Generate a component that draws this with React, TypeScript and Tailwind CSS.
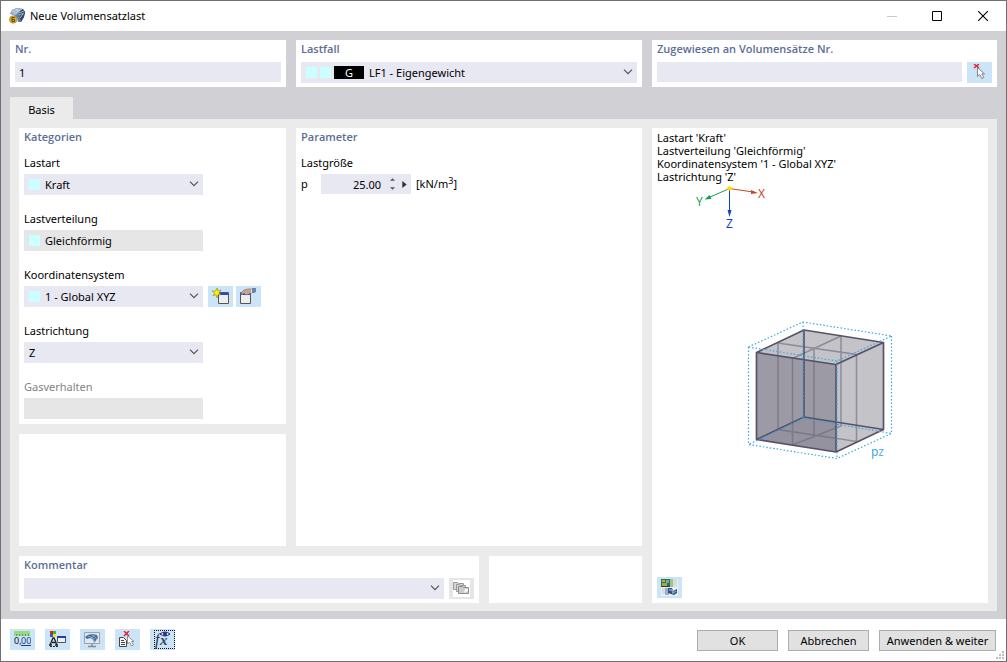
import React from 'react';
import clsx from 'clsx';

const fieldBase = 'block w-full appearance-none rounded-none border-0 py-0 outline-none';
const headingBase = "block font-['Open_Sans',sans-serif] font-semibold leading-[18px] text-[#5c6e96]";

const Panel: React.FC<{ title?: string; htmlFor?: string; className?: string; children?: React.ReactNode }> = ({
  title,
  htmlFor,
  className,
  children,
}) => (
  <section className={clsx('bg-white px-[5px]', className)}>
    {title && htmlFor && (
      <label htmlFor={htmlFor} className={headingBase}>
        {title}
      </label>
    )}
    {title && !htmlFor && <h2 className={headingBase}>{title}</h2>}
    {children}
  </section>
);

const Chevron = () => (
  <svg className="pointer-events-none absolute right-1 top-[7px] h-[6px] w-[10px]" viewBox="0 0 10 6" fill="none">
    <path d="M1 .7 5 4.7 9 .7" stroke="#555" strokeWidth="1.2" />
  </svg>
);

interface SelectBoxProps {
  id: string;
  value?: string;
  swatch?: boolean;
  disabled?: boolean;
}

const SelectBox: React.FC<SelectBoxProps> = ({ id, value = '', swatch, disabled }) => (
  <div className="relative h-[21px] min-w-0 flex-1">
    <select
      id={id}
      disabled={disabled}
      className={clsx(
        fieldBase,
        'h-[21px] text-black opacity-100',
        swatch ? 'pl-[21px]' : 'pl-[5px]',
        disabled ? 'bg-[#e6e6e6]' : 'bg-[#e8e8f3]',
      )}
    >
      <option>{value}</option>
    </select>
    {swatch && <span className="pointer-events-none absolute left-[5px] top-[5px] h-[11px] w-[11px] bg-[#ccffff]" />}
    {!disabled && <Chevron />}
  </div>
);

const Field: React.FC<{ id: string; label: string; muted?: boolean; extra?: React.ReactNode; children: React.ReactNode }> = ({
  id,
  label,
  muted,
  extra,
  children,
}) => (
  <div>
    <label htmlFor={id} className={clsx('mb-[3px] block leading-4', muted && 'text-[#838383]')}>
      {label}
    </label>
    <div className="flex gap-[5px]">
      <div className="flex w-[179px]">{children}</div>
      {extra}
    </div>
  </div>
);

const IconButton: React.FC<{ label: string; disabled?: boolean; children: React.ReactNode }> = ({ label, disabled, children }) => (
  <button
    type="button"
    aria-label={label}
    disabled={disabled}
    className={clsx('flex h-[21px] w-[25px] shrink-0 items-center justify-center', disabled ? 'bg-[#e6e6e6]' : 'bg-[#cce4f7]')}
  >
    {children}
  </button>
);

const iconProps = { width: 17, height: 17, viewBox: '0 0 17 17', fill: 'none' };

const AppIcon = () => (
  <svg width="16" height="16" viewBox="0 0 16 16">
    <path d="M1 6 3 2 8 0l6 1 2 3-1 5-3 5-3 0-1-4-3-3z" fill="#64809f" />
    <path d="M3 2 8 0l6 1-4 3-3 3-5-1z" fill="#9bb5d5" />
    <path d="m10 4 4-3 2 3-1 5-3 5-1-4z" fill="#334663" />
    <path d="M3 4l6-2m-4 4 6-4M7 1l4 2M10 5l5-2m-5 4 5-2m-4 5 3-4" stroke="#d5e1ef" strokeWidth=".7" />
    <circle cx="4.2" cy="11.5" r="3.8" fill="#d9a928" stroke="#a77a12" strokeWidth=".5" />
    <path d="M5.700 9.500H3v4h2.500v-2H3" fill="none" stroke="#5c4818" />
  </svg>
);

const PickIcon = () => (
  <svg {...iconProps}>
    <path d="m3 0 5 4M8 0 3 4" stroke="#e52330" strokeWidth="1.500" />
    <path d="M6.500 3.500v9l2.300-2 2 4 2-1-2-3.700h2.700z" fill="#fff" stroke="#777" strokeWidth=".9" />
  </svg>
);

const NewWindowIcon = () => (
  <svg {...iconProps}>
    <path d="M6.500 4.500h10v11h-10z" fill="#eee" stroke="#555" />
    <path d="M7 5h9v2H7z" fill="#2446e8" />
    <path d="m5 0 1 3 3-1-2 3 2 2-3-.5L5 10 4 6.500 1 8l1.500-3L0 3l3.500.2z" fill="#fff200" stroke="#8a8626" strokeWidth=".6" />
  </svg>
);

const EditWindowIcon = () => (
  <svg {...iconProps}>
    <path d="M.5 4.500h10v11H.5z" fill="#eee" stroke="#555" />
    <path d="M1 5h9v2H1z" fill="#2446e8" />
    <path d="m1 5 3-3 4-1h4v4L9 6 6 7 4 5 2 7z" fill="#c7a48d" stroke="#81695b" strokeWidth=".6" />
    <path d="M12 0h4v4l-2 1h-2z" fill="#6685ae" />
    <path d="M11 1h1v4h-1z" fill="#d9e0ea" />
  </svg>
);

const LibraryIcon = () => (
  <svg {...iconProps}>
    <path d="M0 0h17v17H0z" fill="#fff" />
    <path d="M.5 2.500h4l1 1h5v6h-10z" fill="#d6d6d6" stroke="#999" />
    <path d="M3.500 4.500h3l1 1h5v6h-9z" fill="#d6d6d6" stroke="#999" />
    <path d="M5.500 6.500h4l1 1h5v6h-10z" fill="#ccc" stroke="#8c8c8c" />
    <path d="m11 13 1-4h3v2z" fill="#f8f8f8" />
  </svg>
);

const PictureIcon = () => (
  <svg {...iconProps}>
    <path d="M0 0h17v17H0z" fill="#eaf0f3" />
    <path d="M8 0h4v8H8z" fill="#a4bd9d" />
    <path d="M12 0h4v8h-4z" fill="#d5dfd3" />
    <path d="M0 0h9v7H0z" fill="#35743f" />
    <path d="M1 4h5v3H1z" fill="#8bb64e" />
    <path d="M5 1h3v3H5z" fill="#69a7cd" />
    <path d="M1 1h3v2H1z" fill="#d2a82d" />
    <path d="M0 7h9v1H0z" fill="#333" />
    <path d="M1 9h4v6H1z" fill="#d5dce4" />
    <path d="M4 9h4v7H4z" fill="#9eb0c7" />
    <path d="M7 9h4l1 3 4-2v4l-3 2-6-2z" fill="#354d75" />
    <path d="m8 11 3 0 1 3 3-2" fill="none" stroke="#7ba6da" strokeWidth="1.500" />
  </svg>
);

const DecimalsIcon = () => (
  <svg {...iconProps} className="font-['Noto_Sans',sans-serif] text-[9px]">
    <path d="M0 0h16v5H0z" fill="#98d982" />
    <path d="M2.500 3v2m3-2v2m3-2v2m3-2v2m3-2v2" stroke="#5f9f55" />
    <text x="0" y="13" fill="#111">0,</text>
    <text x="7" y="13" fill="#1f3e83">00</text>
    <path d="M7 14.500h10" stroke="#1f3e83" />
  </svg>
);

const DisplayIcon = () => (
  <svg {...iconProps}>
    <path d="M1 0h3v3H1z" fill="#e31b22" />
    <path d="M4 0h3v3H4z" fill="#38b33b" />
    <path d="M1 3h3v3H1z" fill="#2959df" />
    <path d="M4 3h3v3H4z" fill="#ffe11b" />
    <path d="m1 14 3-7h1l3 7M3 11.500h4M0 14h3m3 0h3" stroke="#222" strokeWidth="1.300" />
    <path d="M1 15.500h8" stroke="#222" strokeDasharray="2 1" />
    <path d="M8.500 5.500h8v6h-8z" fill="#eee" stroke="#555" />
    <path d="M8 5h9v2H8z" fill="#233fa0" />
  </svg>
);

const MonitorIcon = () => (
  <svg {...iconProps}>
    <path d="M.5 1.500h15v11H.5z" fill="#dfe8ee" stroke="#9aa3aa" />
    <path d="M8 13v2M4 15.500h8" stroke="#858d94" strokeWidth="1.500" />
    <path d="M1 6q5-5 12-2l1 3-4 5q0-4-4-5l-3 1z" fill="#426e9c" />
    <path d="m4 5 5 2 2 4m-4-8 4 3 2 3M7 8l4-5" stroke="#a7bfd5" strokeWidth=".7" />
  </svg>
);

const SelectionListIcon = () => (
  <svg {...iconProps}>
    <path d="M.5 6.500h4l3 3v6h-7z" fill="#f4f4f4" stroke="#444" />
    <path d="M2 9.500h3m-3 2h4m-4 2h4" stroke="#444" />
    <path d="m5 0 5 5m0-5L5 5" stroke="#e52330" strokeWidth="1.500" />
    <path d="M8.500 5v8l2-2 2 4 2-1-2-3.500h2.500z" fill="#fff" stroke="#888" strokeWidth=".9" />
  </svg>
);

const FormulaIcon = () => (
  <svg width="25" height="21" viewBox="0 0 25 21" fill="none">
    <g stroke="#111" strokeDasharray="1 1" shapeRendering="crispEdges">
      <path d="M4 1.500h21" />
      <path d="M4 19.500h21" />
      <path d="M4.500 1v19" />
      <path d="M24.500 1v19" />
    </g>
    <text x="5" y="16" fontSize="16" fontStyle="italic" fontFamily="Liberation Serif, serif" fill="#26364c">
      f
    </text>
    <text x="10" y="16" fontSize="15" fontStyle="italic" fontWeight="bold" fontFamily="Liberation Serif, serif" fill="#34465e">
      x
    </text>
    <path d="M10 5q5-4 10 0-5 4-10 0z" fill="#d8def3" stroke="#20286f" />
    <circle cx="15" cy="5" r="2" fill="#292f86" />
  </svg>
);

const AxisDrawing = () => (
  <svg className="ml-[35px] h-[50px] w-20 font-['Noto_Sans',sans-serif] text-[12px]" viewBox="692 183 80 50">
    <path d="M729.500 188.500 753 192" stroke="#c8461e" />
    <path d="m758 193-7-3v4z" fill="#c8461e" />
    <path d="M729.500 188.500 709 197.500" stroke="#12a150" />
    <path d="m704.500 199.500 5-4.500 2 4z" fill="#12a150" />
    <path d="M729.500 188.500V211" stroke="#1440c8" />
    <path d="m729.500 217-2-7h4z" fill="#1440c8" />
    <circle cx="729.500" cy="188.500" r="2.300" fill="#ffdc00" />
    <text x="758" y="198" fill="#c8461e">X</text>
    <text x="696" y="206" fill="#12a150">Y</text>
    <text x="726" y="228" fill="#1440c8">Z</text>
  </svg>
);

const CubeDrawing = () => (
  <svg className="mx-auto h-40 w-40" viewBox="0 0 160 160" fill="none">
    <path d="M16.500 42.500 64 20l79.500 12.500v87L96 142 16.500 129.500z" fill="#c3c3c8" />
    <path d="m16.500 42.500 79.500 12V142l-79.500-12.500z" fill="#9b9aa5" />
    <path d="M16.500 129.500 64 107l32 5v30z" fill="#93929e" />
    {/* mid-plane lines */}
    <g stroke="#6c667c" strokeOpacity=".6" strokeWidth="1.500">
      <path d="m38 33 78.500 11.500v87L38 119.500zM52.500 48.500 101 26v90l-48.500 19zM74 38v88" />
    </g>
    {/* cube edges */}
    <g stroke="#57526a" strokeWidth="1.700" strokeLinejoin="round">
      <path d="M16.500 42.500 64 20l79.500 12.500L96 54.500zM16.500 42.500v87L96 142l47.500-22.500v-87M96 54.500V142M64 20v87l-47.500 22.500M64 107l79.500 12.500" />
    </g>
    {/* load outline */}
    <g stroke="#36a9e1" strokeWidth="1.200" strokeDasharray="1.500 2">
      <path d="M8.500 37 63 12l88.500 14L97 51zM8.500 37v97.500L97 148.500l54.500-25V26M97 51v97.500M63 12v96.500L8.500 134.500M63 108.500l88.500 15" />
    </g>
    <text x="131" y="146" fontSize="12" fontFamily="Noto Sans, sans-serif" fill="#36a9e1">
      p<tspan fontSize="9">Z</tspan>
    </text>
  </svg>
);

const TitleBar = () => (
  <header className="flex h-[30px] shrink-0 items-center bg-white pl-2">
    <AppIcon />
    <h1 className="ml-[5px] flex-1">Neue Volumensatzlast</h1>
    <div className="flex h-full">
      <button type="button" aria-label="Minimieren" className="flex w-[45px] items-center justify-center">
        <svg width="10" height="10" viewBox="0 0 10 10"><path d="M0 5.500h10" stroke="#c8c8c8" /></svg>
      </button>
      <button type="button" aria-label="Maximieren" className="flex w-[46px] items-center justify-center">
        <svg width="10" height="10" viewBox="0 0 10 10" fill="none"><path d="M.5.5h9v9h-9z" stroke="#000" /></svg>
      </button>
      <button type="button" aria-label="Schließen" className="flex w-[46px] items-center justify-center">
        <svg width="10" height="10" viewBox="0 0 10 10"><path d="m0 0 10 10M10 0 0 10" stroke="#000" strokeWidth="1.100" /></svg>
      </button>
    </div>
  </header>
);

const HeaderPanels = () => (
  <div className="grid grid-cols-[276fr_346fr_345fr] gap-[10px]">
    <Panel title="Nr." htmlFor="nr" className="h-[47px]">
      <input id="nr" defaultValue="1" className={clsx(fieldBase, 'mt-1 h-5 bg-[#e8e8f3] px-1')} />
    </Panel>
    <Panel title="Lastfall" htmlFor="lastfall" className="h-[47px]">
      <div className="relative mt-1">
        <select id="lastfall" className={clsx(fieldBase, 'h-[21px] bg-[#e8e8f3] pl-[68px]')}>
          <option>LF1 - Eigengewicht</option>
        </select>
        <div className="pointer-events-none absolute left-[5px] top-1 flex items-center gap-[3px]">
          <span className="h-[11px] w-[11px] bg-[#ccffff]" />
          <span className="h-[11px] w-[11px] bg-[#ccffff]" />
          <span className="h-[13px] w-[30px] bg-black text-center leading-[13px] text-white">G</span>
        </div>
        <Chevron />
      </div>
    </Panel>
    <Panel title="Zugewiesen an Volumensätze Nr." htmlFor="zugewiesen" className="h-[47px]">
      <div className="mt-1 flex gap-[5px]">
        <input id="zugewiesen" className={clsx(fieldBase, 'h-5 min-w-0 flex-1 bg-[#e8e8f3] px-1')} />
        <IconButton label="Auswählen"><PickIcon /></IconButton>
      </div>
    </Panel>
  </div>
);

const CategoriesPanel = () => (
  <Panel title="Kategorien" className="pb-[5px]">
    <div className="mt-[9px] flex flex-col gap-4">
      <Field id="lastart" label="Lastart">
        <SelectBox id="lastart" value="Kraft" swatch />
      </Field>
      <Field id="lastverteilung" label="Lastverteilung">
        <SelectBox id="lastverteilung" value="Gleichförmig" swatch disabled />
      </Field>
      <Field
        id="koordinatensystem"
        label="Koordinatensystem"
        extra={
          <div className="flex gap-[3px]">
            <IconButton label="Neu"><NewWindowIcon /></IconButton>
            <IconButton label="Bearbeiten"><EditWindowIcon /></IconButton>
          </div>
        }
      >
        <SelectBox id="koordinatensystem" value="1 - Global XYZ" swatch />
      </Field>
      <Field id="lastrichtung" label="Lastrichtung">
        <SelectBox id="lastrichtung" value="Z" />
      </Field>
      <Field id="gasverhalten" label="Gasverhalten" muted>
        <SelectBox id="gasverhalten" disabled />
      </Field>
    </div>
  </Panel>
);

const ParameterPanel = () => (
  <Panel title="Parameter">
    <h3 className="mb-[3px] mt-[9px] leading-4">Lastgröße</h3>
    <div className="flex h-5 items-center">
      <label htmlFor="p" className="w-5">p</label>
      <div className="flex h-5 w-[90px] items-center bg-[#e8e8f3]">
        <input id="p" defaultValue="25.00" className={clsx(fieldBase, 'h-5 min-w-0 flex-1 bg-transparent text-right')} />
        <div className="ml-[9px] flex flex-col gap-[6px]">
          <button type="button" aria-label="Erhöhen" className="block">
            <svg className="block" width="5" height="3" viewBox="0 0 6 3"><path d="m3 0 3 3H0z" fill="#555" /></svg>
          </button>
          <button type="button" aria-label="Verringern" className="block">
            <svg className="block" width="5" height="3" viewBox="0 0 6 3"><path d="m3 3 3-3H0z" fill="#555" /></svg>
          </button>
        </div>
        <button type="button" aria-label="Optionen" className="ml-[7px] mr-1">
          <svg width="5" height="7" viewBox="0 0 5 8"><path d="m0 0 5 4-5 4z" fill="#333" /></svg>
        </button>
      </div>
      <span className="ml-[5px]">
        [kN/m<sup className="text-[9px]">3</sup>]
      </span>
    </div>
  </Panel>
);

const PreviewPanel = () => (
  <Panel className="flex flex-col pb-[5px] pt-[3px]">
    <div className="leading-[13px]">
      <p>Lastart 'Kraft'</p>
      <p>Lastverteilung 'Gleichförmig'</p>
      <p>Koordinatensystem '1 - Global XYZ'</p>
      <p>Lastrichtung 'Z'</p>
    </div>
    <AxisDrawing />
    <div className="mt-[77px]">
      <CubeDrawing />
    </div>
    <div className="mt-auto">
      <IconButton label="Bild"><PictureIcon /></IconButton>
    </div>
  </Panel>
);

const dialogButton = 'h-[21px] border border-[#adadad] bg-[#e1e1e1] leading-[19px]';

const Footer = () => (
  <footer className="relative flex h-[42px] shrink-0 items-start justify-between bg-white pl-[9px] pr-[10px] pt-[10px]">
    <div className="flex gap-[10px]">
      <IconButton label="Einheiten"><DecimalsIcon /></IconButton>
      <IconButton label="Anzeige"><DisplayIcon /></IconButton>
      <IconButton label="Ansicht"><MonitorIcon /></IconButton>
      <IconButton label="Auswahl"><SelectionListIcon /></IconButton>
      <IconButton label="Formel"><FormulaIcon /></IconButton>
    </div>
    <div className="flex gap-[10px] pt-px">
      <button type="button" className={clsx(dialogButton, 'w-[81px]')}>OK</button>
      <button type="button" className={clsx(dialogButton, 'w-[81px]')}>Abbrechen</button>
      <button type="button" className={clsx(dialogButton, 'w-[117px]')}>Anwenden &amp; weiter</button>
    </div>
    <svg className="absolute bottom-[2px] right-[2px]" width="8" height="8" viewBox="0 0 8 8">
      <path d="M6 0h2v2H6zM3 3h2v2H3zM6 3h2v2H6zM0 6h2v2H0zM3 6h2v2H3zM6 6h2v2H6z" fill="#bfbfbf" />
    </svg>
  </footer>
);

export default function App() {
  return (
    <div className="flex min-h-screen flex-col border border-[#707070] bg-[#d1d0d5] font-['Noto_Sans',sans-serif] text-[11px] leading-4 text-black">
      <TitleBar />
      <main className="flex flex-1 flex-col px-[9px] pb-2 pt-[9px]">
        <HeaderPanels />
        <div role="tablist" className="mt-[10px] flex">
          <button type="button" role="tab" aria-selected="true" className="h-[22px] w-[63px] bg-[#ebebeb] pt-1">
            Basis
          </button>
        </div>
        <div role="tabpanel" className="grid flex-1 grid-cols-[623fr_336fr] gap-[10px] bg-[#ebebeb] px-[9px] pb-2 pt-[9px]">
          <div className="flex flex-col gap-[10px]">
            <div className="grid flex-1 grid-cols-[267fr_346fr] gap-[10px]">
              <div className="flex flex-col gap-[10px]">
                <CategoriesPanel />
                <Panel className="flex-1" />
              </div>
              <ParameterPanel />
            </div>
            <div className="grid grid-cols-[460fr_153fr] gap-[10px]">
              <Panel title="Kommentar" htmlFor="kommentar" className="h-[47px]">
                <div className="mt-1 flex gap-[5px]">
                  <SelectBox id="kommentar" />
                  <IconButton label="Kommentare" disabled><LibraryIcon /></IconButton>
                </div>
              </Panel>
              <Panel />
            </div>
          </div>
          <PreviewPanel />
        </div>
      </main>
      <Footer />
    </div>
  );
}
